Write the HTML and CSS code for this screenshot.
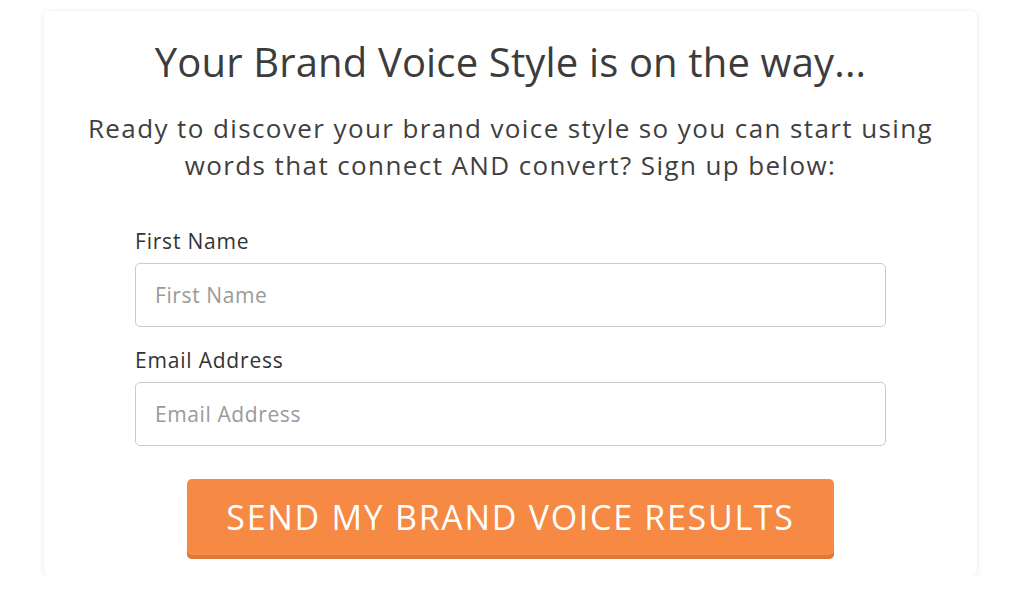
FILE: index.html
```html
<!DOCTYPE html>
<html lang="en">
<head>
<meta charset="utf-8">
<title>Brand Voice Style</title>
<link rel="stylesheet" href="styles.css">
</head>
<body>
<div class="page">
  <div class="card">
    <h1 class="title">Your Brand Voice Style is on the way...</h1>
    <p class="lead">Ready to discover your brand voice style so you can start using<br>words that connect AND convert? Sign up below:</p>
    <form class="form">
      <label class="field">
        <span class="label">First Name</span>
        <input class="input" type="text" placeholder="First Name">
      </label>
      <label class="field">
        <span class="label">Email Address</span>
        <input class="input" type="email" placeholder="Email Address">
      </label>
      <button class="btn" type="button">SEND MY BRAND VOICE RESULTS</button>
    </form>
  </div>
</div>
</body>
</html>
```
FILE: styles.css
```css
* { box-sizing: border-box; }
html, body { margin: 0; padding: 0; background: #fff; }
body { font-family: "Open Sans", "Lato", sans-serif; color: #3f3f3f; }
.page { padding: 11px 47px 0 44px; }
.card {
  background: #fff;
  border-radius: 6px;
  box-shadow: 0 1px 7px rgba(0,0,0,0.09);
  height: 565px;
  padding: 27px 0 0;
  display: flex;
  flex-direction: column;
  align-items: center;
}
.title {
  margin: 0;
  font-weight: 400;
  font-size: 40px;
  line-height: 48px;
  color: #3c3c3c;
  letter-spacing: 0.15px;
}
.lead {
  margin: 24px 0 0;
  text-align: center;
  font-size: 26px;
  line-height: 37px;
  color: #3f3f3f;
  letter-spacing: 1.4px;
}
.form {
  width: 751px;
  margin-top: 45px;
  display: flex;
  flex-direction: column;
  align-items: center;
}
.field { display: flex; flex-direction: column; width: 100%; margin-bottom: 21px; }
.label {
  font-size: 21px;
  line-height: 24px;
  font-weight: 500;
  color: #333;
  margin-bottom: 10px;
  letter-spacing: 0.8px;
}
.input {
  height: 64px;
  border: 1.5px solid #cbcbcb;
  border-radius: 5px;
  padding: 0 19px;
  font-family: inherit;
  font-size: 21px;
  letter-spacing: 0.6px;
  color: #333;
  outline: none;
}
.input::placeholder { color: #9a9a9a; }
.btn {
  margin-top: 12px;
  width: 647px;
  height: 80px;
  border: 0;
  border-radius: 5px;
  background: #f68944;
  box-shadow: inset 0 -4px 0 #e07839;
  color: #fff;
  font-family: inherit;
  font-size: 34px;
  letter-spacing: 1.7px;
  font-weight: 500;
  padding: 0 0 4px;
  cursor: pointer;
}
```
